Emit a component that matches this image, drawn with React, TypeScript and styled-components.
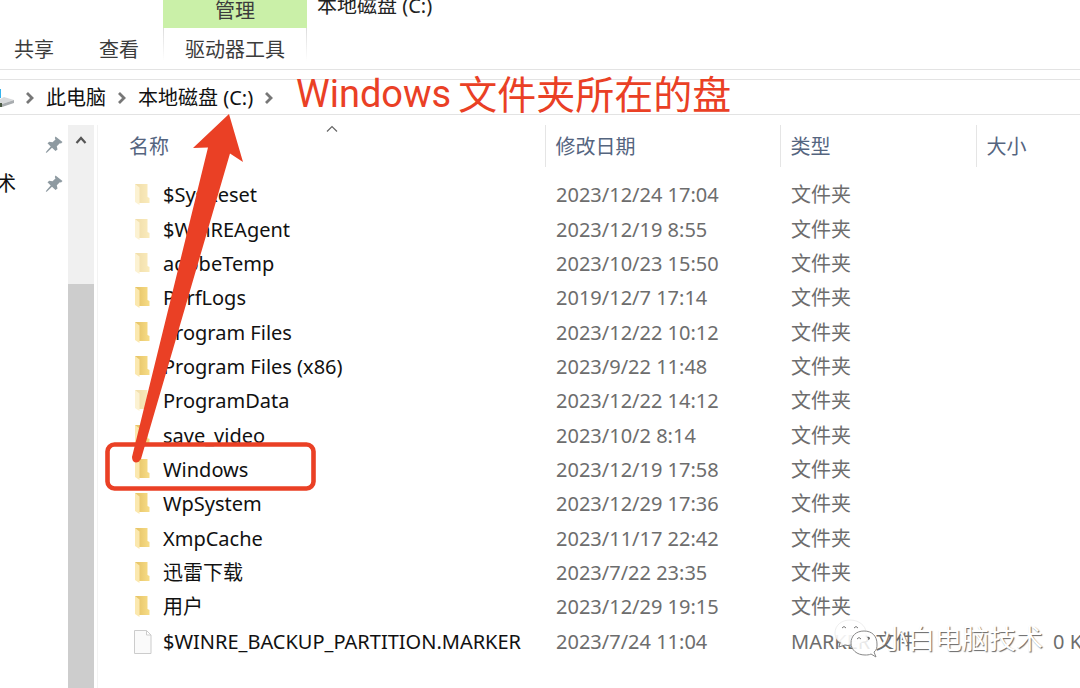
import React from "react";
import styled, { createGlobalStyle } from "styled-components";

const uiFont = `"Noto Sans", "Noto Sans CJK SC", sans-serif`;
const red = "#ea4025";

const Global = createGlobalStyle`
  * { box-sizing: border-box; }
  body { margin: 0; background: #fff; overflow: hidden; font: 20px/34px ${uiFont}; color: #111; }
  button { font: inherit; color: inherit; border: 0; background: none; padding: 0; cursor: pointer; white-space: nowrap; }
  h1 { font: inherit; margin: 0; }
`;

const Explorer = styled.main`
  position: relative;
  display: flex;
  flex-direction: column;
  min-height: 100vh;
`;

const Ribbon = styled.header`
  display: flex;
  align-items: flex-end;
  height: 70px;
  border-bottom: 1px solid #e3e3e3;
  color: #3c3c3c;
`;

const Tabs = styled.nav`
  display: flex;
  align-items: center;
  gap: 45px;
  width: 163px;
  height: 38px;
  padding-left: 14px;
`;

const ContextGroup = styled.div`
  display: flex;
  flex-direction: column;
  align-items: center;
  width: 144px;
  height: 69px;
`;

const GroupTitle = styled.div`
  width: 100%;
  height: 28px;
  line-height: 22px;
  text-align: center;
  background: #caf0a8;
`;

const GroupTab = styled.button`
  width: 100%;
  height: 41px;
  padding-top: 2px;
  background: linear-gradient(#dcdcdc, #fff 80%) left / 1px 100% no-repeat,
    linear-gradient(#dcdcdc, #fff 80%) right / 1px 100% no-repeat;
`;

const Title = styled.h1`
  align-self: flex-start;
  height: 20px;
  margin-left: 10px;
  line-height: 12px;
  color: #222;
`;

const AddressBar = styled.nav`
  display: flex;
  align-items: center;
  gap: 11px;
  height: 36px;
  margin-top: 9px;
  padding-top: 2px;
  border: solid #e3e3e3;
  border-width: 1px 0;
  svg { flex: none; }
`;

const Body = styled.div`
  display: flex;
  flex: 1;
`;

const QuickAccess = styled.aside`
  display: flex;
  flex-direction: column;
  width: 68px;
  padding: 10px 5px 0 0;
`;

const Pinned = styled.div`
  display: flex;
  align-items: center;
  justify-content: space-between;
  height: 39px;
`;

const PinnedName = styled.span`
  margin-left: -4px;
`;

const ScrollBar = styled.div`
  display: flex;
  flex-direction: column;
  width: 26px;
  margin-top: 10px;
  background: #f0f0f0;
`;

const ScrollUp = styled.button`
  display: flex;
  justify-content: center;
  height: 159px;
  padding-top: 10px;
`;

const Thumb = styled.div`
  flex: 1;
  background: #cdcdcd;
`;

const Listing = styled.section`
  flex: 1;
  margin: 10px 0 0 3px;
  min-width: 0;
  overflow: hidden;
  border-left: 1px solid #f3f3f3;
`;

const Files = styled.table`
  width: 100%;
  border-collapse: collapse;
  table-layout: fixed;
  white-space: nowrap;
`;

const Col = styled.col<{ $w?: number }>`
  width: ${(p) => (p.$w ? `${p.$w}px` : "auto")};
`;

const Head = styled.th<{ $first?: boolean }>`
  position: relative;
  height: 42px;
  padding: 2px 0 0 ${(p) => (p.$first ? 31 : 10)}px;
  border-left: ${(p) => (p.$first ? 0 : 1)}px solid #e5e5e5;
  font-weight: 400;
  text-align: left;
  color: #55657f;
`;

const SortMark = styled.svg`
  position: absolute;
  top: 0;
  right: 206px;
`;

const Spacer = styled.tr`
  height: 11px;
`;

const Row = styled.tr`
  height: 34px;
  &:nth-child(3n) { height: 35px; }
`;

const Cell = styled.td<{ $size?: boolean }>`
  padding: 0 0 0 ${(p) => (p.$size ? 77 : 11)}px;
  color: #6d6d6d;
`;

const NameCell = styled.td`
  padding: 0 0 0 36px;
`;

const Entry = styled.span`
  display: flex;
  align-items: center;
  gap: 11px;
  color: #111;
`;

const Arrow = styled.svg`
  position: absolute;
  left: 100px;
  top: 110px;
  pointer-events: none;
`;

const Callout = styled.p`
  position: absolute;
  left: 296px;
  top: 70px;
  display: flex;
  gap: 7px;
  margin: 0;
  font: 39px/44px "Noto Sans CJK SC", sans-serif;
  color: ${red};
  white-space: nowrap;
`;

const Latin = styled.span`
  font-family: Roboto, sans-serif;
  font-size: 38px;
  line-height: 48px;
`;

const Watermark = styled.div`
  position: absolute;
  left: 834px;
  top: 618px;
  display: flex;
  gap: 3px;
  font: 27px/40px "Noto Sans CJK SC", sans-serif;
  color: #fff;
  text-shadow: 1px 1px 1px #666;
  white-space: nowrap;
`;

const Chevron = () => (
  <svg width="10" height="14" viewBox="0 0 10 14" fill="none" stroke="#777" strokeWidth="2.8">
    <path d="M2 2l5 5-5 5" />
  </svg>
);

const Pin = () => (
  <svg width="18" height="18" viewBox="0 0 18 18" fill="#8e9aa1">
    <path d="M10.500 .5 17.500 6 16 7.500 14.800 7.300 11.800 10.300 12.500 13.500 10.500 15 7 11.800 2 16.500 .8 17 1.300 15.500 5.700 10.500 2.500 7.300 4.300 5.700 7.500 6.300 10.500 3.500 9.800 2Z" />
  </svg>
);

const Folder = ({ faded }: { faded?: boolean }) => (
  <svg width="18" height="22" viewBox="0 0 18 22" opacity={faded ? 0.55 : 1}>
    <defs>
      <linearGradient id="folderBody">
        <stop offset="0.2" stopColor="#e8c66a" />
        <stop offset="1" stopColor="#f7dd88" />
      </linearGradient>
    </defs>
    <path d="M1 0H13.500V13L15.500 14V19H4Z" fill="url(#folderBody)" />
    <path d="M1 0 5.500 3.500V21L1 18Z" fill="#fbe8ae" />
  </svg>
);

const FileIcon = () => (
  <svg width="18" height="24" viewBox="0 0 18 24" fill="#fafafa" stroke="#ccc">
    <path d="M.5.500H12.500L17 5V23.500H.5ZM12.500.500V5H17" />
  </svg>
);

const WeChat = () => (
  <svg width="44" height="40" viewBox="0 0 44 40">
    <path d="M16 2C8 2 1 7 1 15c0 5 3 8 6 10l-2 4 6-2q5 2 10 0 11-3 11-12C32 7 24 2 16 2Z" fill="#fff" fillOpacity=".9" stroke="#e6e6e6" strokeWidth=".7" />
    <path d="M6 24l-1 5 6-2q3 1 6 0" stroke="#777" fill="none" />
    <path d="M30 13c-8 0-13 5-13 12 0 7 6 12 14 12 2 0 4 0 6-1l5 3-2-5c3-2 3-5 3-8 0-8-5-13-13-13Z" fill="#fff" fillOpacity=".85" stroke="#888" />
    <path d="M8 10q2-3 4 0M20 10q2-3 4 0M23 21q2-3 4 0" fill="none" stroke="#777" />
    <path d="M33 19q3-1 3 2l-2 1q1-2-1-3Z" fill="#666" />
  </svg>
);

type Item = { name: string; date: string; faded?: boolean; type?: string; size?: string };

const items: Item[] = [
  { name: "$SysReset", date: "2023/12/24 17:04", faded: true },
  { name: "$WinREAgent", date: "2023/12/19 8:55", faded: true },
  { name: "adobeTemp", date: "2023/10/23 15:50", faded: true },
  { name: "PerfLogs", date: "2019/12/7 17:14" },
  { name: "Program Files", date: "2023/12/22 10:12" },
  { name: "Program Files (x86)", date: "2023/9/22 11:48" },
  { name: "ProgramData", date: "2023/12/22 14:12", faded: true },
  { name: "save_video", date: "2023/10/2 8:14" },
  { name: "Windows", date: "2023/12/19 17:58" },
  { name: "WpSystem", date: "2023/12/29 17:36" },
  { name: "XmpCache", date: "2023/11/17 22:42" },
  { name: "迅雷下载", date: "2023/7/22 23:35" },
  { name: "用户", date: "2023/12/29 19:15" },
  { name: "$WINRE_BACKUP_PARTITION.MARKER", date: "2023/7/24 11:04", type: "MARKER 文件", size: "0 KB" },
];

export default function App() {
  return (
    <Explorer>
      <Global />
      <Ribbon>
        <Tabs>
          <button>共享</button>
          <button>查看</button>
        </Tabs>
        <ContextGroup>
          <GroupTitle>管理</GroupTitle>
          <GroupTab>驱动器工具</GroupTab>
        </ContextGroup>
        <Title>本地磁盘 (C:)</Title>
      </Ribbon>
      <AddressBar>
        <svg width="14" height="24" viewBox="0 0 14 24">
          <path d="M0 3h1v9H0z" fill="#35b4ee" />
          <path d="M0 13 4 11 14 14 2 18H0Z" fill="#d8dadc" />
          <path d="M2 18 14 14V17L2 21Z" fill="#a9adb0" />
          <path d="M0 17h2v4H0z" fill="#4b5a45" />
        </svg>
        <Chevron />
        <button>此电脑</button>
        <Chevron />
        <button>本地磁盘 (C:)</button>
        <Chevron />
      </AddressBar>
      <Body>
        <QuickAccess>
          <Pinned><span /><Pin /></Pinned>
          <Pinned><PinnedName>术</PinnedName><Pin /></Pinned>
        </QuickAccess>
        <ScrollBar>
          <ScrollUp aria-label="向上滚动">
            <svg width="12" height="10" viewBox="0 0 12 10" fill="none" stroke="#555" strokeWidth="2.2"><path d="M1.500 8 6 3l4.500 5" /></svg>
          </ScrollUp>
          <Thumb />
        </ScrollBar>
        <Listing>
          <Files>
            <colgroup>
              <Col $w={447} /><Col $w={235} /><Col $w={196} /><Col />
            </colgroup>
            <thead>
              <tr>
                <Head $first>
                  名称
                  <SortMark width="14" height="8" viewBox="0 0 14 8" fill="none" stroke="#666" strokeWidth="1.2"><path d="M2 6.500 7 1.500l5 5" /></SortMark>
                </Head>
                <Head>修改日期</Head>
                <Head>类型</Head>
                <Head>大小</Head>
              </tr>
            </thead>
            <tbody>
              <Spacer />
              {items.map((it) => (
                <Row key={it.name}>
                  <NameCell>
                    <Entry>{it.type ? <FileIcon /> : <Folder faded={it.faded} />}{it.name}</Entry>
                  </NameCell>
                  <Cell>{it.date}</Cell>
                  <Cell>{it.type ?? "文件夹"}</Cell>
                  <Cell $size>{it.size}</Cell>
                </Row>
              ))}
            </tbody>
          </Files>
        </Listing>
      </Body>
      <Arrow width="220" height="385" viewBox="100 110 220 385">
        <rect x="107.500" y="444.500" width="206" height="44" rx="7" fill="none" stroke={red} strokeWidth="4.600" />
        <path d="M229 114 243 162 230 153.500 141 459Q137 465 133 461Q132 459 132 457L208 147.500 193 148Z" fill={red} />
      </Arrow>
      <Callout><Latin>Windows</Latin><span>文件夹所在的盘</span></Callout>
      <Watermark><WeChat />小白电脑技术</Watermark>
    </Explorer>
  );
}
